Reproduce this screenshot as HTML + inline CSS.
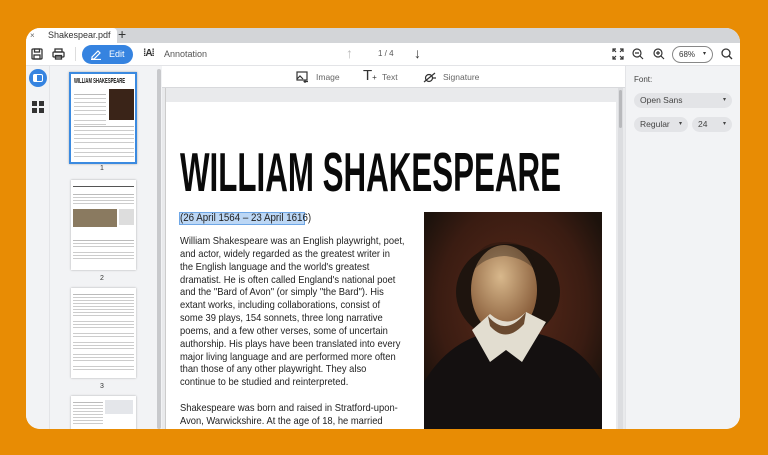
<!DOCTYPE html>
<html><head><meta charset="utf-8"><style>
*{margin:0;padding:0;box-sizing:border-box}
body{width:768px;height:455px;background:#e88c04;position:relative;overflow:hidden;font-family:"Liberation Sans",sans-serif;color:#333}
.win{position:absolute;left:26px;top:28px;width:714px;height:401px;background:#fff;border-radius:14px;overflow:hidden}
.tabbar{position:absolute;left:0;top:0;width:714px;height:15px;background:#d3d5d8}
.tab{position:absolute;left:0;top:0;width:91px;height:15px;background:#fff;border-top-right-radius:4px;font-size:9px;line-height:15px;color:#333}
.tb{position:absolute;left:0;top:15px;width:714px;height:23px;background:#fff;border-bottom:1px solid #e3e4e7}
.ab{position:absolute;font-size:9px;color:#555}
.left{position:absolute;left:0;top:38px;width:24px;height:363px;background:#f2f3f5;border-right:1px solid #e3e4e7}
.thumbs{position:absolute;left:24px;top:38px;width:112px;height:363px;background:#f2f3f5}
.main{position:absolute;left:136px;top:38px;width:463px;height:363px;background:#e9eaec}
.sub{position:absolute;left:0;top:0;width:463px;height:22px;background:#fff;border-bottom:1px solid #d8d9dc}
.right{position:absolute;left:599px;top:38px;width:115px;height:363px;background:#f2f3f5;border-left:1px solid #e3e4e7}
.sel{position:absolute;height:15px;background:#e3e4e7;border-radius:8px;font-size:8.5px;line-height:15px;color:#444;padding-left:6px}
.sel span{position:absolute;right:6px;font-size:6px}
.page{position:absolute;left:4px;top:14px;width:450px;height:340px;background:#fff}
.body{position:absolute;left:14px;font-family:"Liberation Sans",sans-serif;font-size:10.2px;line-height:12.85px;color:#222;white-space:nowrap;transform:scaleX(.92);transform-origin:left top}
.th{position:absolute;background:#fff;box-shadow:0 0 2px rgba(0,0,0,.3)}
.ln{position:absolute;height:1px;background:#bbb}
</style></head><body>
<div class="win">
 <div class="tabbar">
  <div class="tab"><span style="position:absolute;left:4px;font-size:8px;color:#666">×</span><span style="position:absolute;left:22px">Shakespear.pdf</span></div>
  <div style="position:absolute;left:92px;top:-2px;font-size:14px;color:#333">+</div>
 </div>
 <div class="tb">
  <svg style="position:absolute;left:5px;top:5px" width="12" height="12" viewBox="0 0 12 12" fill="none" stroke="#333" stroke-width="1.3"><rect x="1" y="1" width="10" height="10" rx="1"/><rect x="3.5" y="1" width="5" height="3"/><rect x="3" y="7" width="6" height="4"/></svg>
  <svg style="position:absolute;left:26px;top:5px" width="13" height="12" viewBox="0 0 13 12" fill="none" stroke="#333" stroke-width="1.3"><rect x="3" y="1" width="7" height="3"/><rect x="1" y="4" width="11" height="5" rx="1"/><rect x="3.5" y="7.5" width="6" height="3.5"/></svg>
  <div style="position:absolute;left:49px;top:4px;width:1px;height:14px;background:#ddd"></div>
  <div style="position:absolute;left:56px;top:2px;width:51px;height:19px;background:#3583e0;border-radius:10px;color:#fff;font-size:9px;line-height:19px"><svg style="position:absolute;left:8px;top:4px" width="12" height="11" viewBox="0 0 12 11" fill="none" stroke="#fff" stroke-width="1.2"><path d="M2 8 L8 2 L10 4 L4 10 L2 10 Z"/><path d="M1 10.5 H11"/></svg><span style="position:absolute;left:27px">Edit</span></div>
  <div class="ab" style="left:117px;top:5px;font-weight:bold;font-size:10px;color:#333;letter-spacing:-1px">⁞A⁞</div>
  <div class="ab" style="left:138px;top:6px">Annotation</div>
  <div class="ab" style="left:320px;top:2px;font-size:14px;color:#bbb">↑</div>
  <div class="ab" style="left:352px;top:6px;font-size:8px">1 / 4</div>
  <div class="ab" style="left:388px;top:2px;font-size:14px;color:#333">↓</div>
  <svg style="position:absolute;left:586px;top:5px" width="12" height="12" viewBox="0 0 12 12" fill="none" stroke="#333" stroke-width="1.2"><path d="M1 4 V1 H4 M8 1 H11 V4 M11 8 V11 H8 M4 11 H1 V8 M1 1 L4 4 M11 1 L8 4 M11 11 L8 8 M1 11 L4 8"/></svg>
  <svg style="position:absolute;left:606px;top:5px" width="12" height="12" viewBox="0 0 12 12" fill="none" stroke="#333" stroke-width="1.2"><circle cx="5" cy="5" r="4"/><path d="M8 8 L11 11 M3 5 H7"/></svg>
  <svg style="position:absolute;left:627px;top:5px" width="12" height="12" viewBox="0 0 12 12" fill="none" stroke="#333" stroke-width="1.2"><circle cx="5" cy="5" r="4"/><path d="M8 8 L11 11 M3 5 H7 M5 3 V7"/></svg>
  <div style="position:absolute;left:646px;top:3px;width:41px;height:17px;border:1px solid #888;border-radius:9px;font-size:8px;line-height:15px;padding-left:6px;color:#333">68%<span style="position:absolute;right:6px;font-size:6px">▾</span></div>
  <svg style="position:absolute;left:695px;top:5px" width="12" height="12" viewBox="0 0 12 12" fill="none" stroke="#333" stroke-width="1.3"><circle cx="5" cy="5" r="4"/><path d="M8 8 L11 11"/></svg>
 </div>
 <div class="left">
  <div style="position:absolute;left:3px;top:3px;width:18px;height:18px;border-radius:50%;background:#3583e0"><div style="position:absolute;left:4px;top:5px;width:10px;height:8px;border:1.5px solid #fff;border-radius:2px"></div><div style="position:absolute;left:4px;top:5px;width:4px;height:8px;background:#fff;border-radius:2px 0 0 2px"></div></div>
  <div style="position:absolute;left:6px;top:35px;width:12px;height:12px;background:linear-gradient(#333,#333) 0 0/5px 5px no-repeat,linear-gradient(#333,#333) 7px 0/5px 5px no-repeat,linear-gradient(#333,#333) 0 7px/5px 5px no-repeat,linear-gradient(#333,#333) 7px 7px/5px 5px no-repeat"></div>
 </div>
 <div class="thumbs">
  <div class="th" style="left:19px;top:6px;width:68px;height:92px;border:2px solid #3b8ae0">
   <div style="position:absolute;left:3px;top:4px;font-size:7px;font-weight:bold;transform:scaleX(.6);transform-origin:left;white-space:nowrap;color:#111">WILLIAM SHAKESPEARE</div>
   <div style="position:absolute;left:38px;top:15px;width:25px;height:31px;background:#3a2418"></div>
   <div class="ln" style="left:3px;top:20px;width:32px;box-shadow:0 4px #ccc,0 8px #ccc,0 12px #ccc,0 16px #ccc,0 20px #ccc,0 26px #ccc,0 30px #ccc"></div>
   <div class="ln" style="left:3px;top:52px;width:60px;box-shadow:0 4px #ccc,0 8px #ccc,0 12px #ccc,0 16px #ccc,0 22px #ccc,0 26px #ccc,0 30px #ccc"></div>
  </div>
  <div style="position:absolute;left:50px;top:99px;font-size:7px">1</div>
  <div class="th" style="left:21px;top:114px;width:65px;height:90px">
   <div style="position:absolute;left:2px;top:6px;width:61px;height:1px;background:#555"></div>
   <div class="ln" style="left:2px;top:14px;width:61px;box-shadow:0 3px #ccc,0 6px #ccc,0 9px #ccc"></div>
   <div style="position:absolute;left:2px;top:29px;width:44px;height:18px;background:#8a7a60"></div>
   <div style="position:absolute;left:48px;top:29px;width:15px;height:16px;background:#ddd"></div>
   <div class="ln" style="left:2px;top:60px;width:61px;box-shadow:0 3px #ccc,0 6px #ccc,0 12px #ccc,0 15px #ccc,0 18px #ccc"></div>
  </div>
  <div style="position:absolute;left:50px;top:209px;font-size:7px">2</div>
  <div class="th" style="left:21px;top:222px;width:65px;height:90px">
   <div class="ln" style="left:2px;top:6px;width:61px;box-shadow:0 3px #ccc,0 6px #ccc,0 9px #ccc,0 12px #ccc,0 15px #ccc,0 18px #ccc,0 21px #ccc,0 27px #ccc,0 30px #ccc,0 33px #ccc,0 39px #ccc,0 42px #ccc,0 48px #ccc,0 51px #ccc,0 54px #ccc,0 60px #ccc,0 63px #ccc,0 66px #ccc,0 72px #ccc,0 75px #ccc"></div>
  </div>
  <div style="position:absolute;left:50px;top:317px;font-size:7px">3</div>
  <div class="th" style="left:21px;top:330px;width:65px;height:40px">
   <div style="position:absolute;left:34px;top:4px;width:28px;height:14px;background:#e4e6ea"></div>
   <div class="ln" style="left:2px;top:6px;width:30px;box-shadow:0 3px #ccc,0 6px #ccc,0 9px #ccc,0 12px #ccc,0 15px #ccc,0 18px #ccc,0 21px #ccc"></div>
  </div>
  <div style="position:absolute;left:107px;top:3px;width:4px;height:360px;background:#c8c9cc;border-radius:2px"></div>
 </div>
 <div class="main">
  <div class="sub">
   <svg style="position:absolute;left:134px;top:5px" width="13" height="12" viewBox="0 0 13 12" fill="none" stroke="#333" stroke-width="1.2"><rect x="1" y="1" width="10" height="8"/><path d="M1 8 L4 5 L7 8 M9 9 V12 M7.5 10.5 H12"/></svg>
   <div class="ab" style="left:154px;top:6px;font-size:8.5px;color:#666">Image</div>
   <div class="ab" style="left:201px;top:1px;font-size:15px;color:#333">T<span style="font-size:8px">+</span></div>
   <div class="ab" style="left:220px;top:6px;font-size:8.5px;color:#666">Text</div>
   <svg style="position:absolute;left:261px;top:4px" width="14" height="13" viewBox="0 0 14 13" fill="none" stroke="#333" stroke-width="1.2"><circle cx="6" cy="8" r="3.5"/><path d="M1 12 L12 3 M9 8 H13"/></svg>
   <div class="ab" style="left:281px;top:6px;font-size:8.5px;color:#666">Signature</div>
  </div>
  <div style="position:absolute;left:0;top:22px;width:463px;height:341px;background:#e9eaec">
   <div style="position:absolute;left:3px;top:0;width:1px;height:341px;background:#ccc"></div>
   <div class="page">
    <svg style="position:absolute;left:14px;top:44px" width="385" height="50"><text x="0" y="45" textLength="381" lengthAdjust="spacingAndGlyphs" font-family="Liberation Sans Narrow, Liberation Sans, sans-serif" font-weight="bold" font-size="55" fill="#0a0a0a">WILLIAM SHAKESPEARE</text></svg>
    <div style="position:absolute;left:13px;top:110px;width:126px;height:13px;background:#bcd7f5;border:1px solid #6fa7e6"></div>
    <div class="body" style="top:110px;font-size:10.6px">(26 April 1564 – 23 April 1616)</div>
    <div class="body" style="top:134px">William Shakespeare was an English playwright, poet,<br>and actor, widely regarded as the greatest writer in<br>the English language and the world's greatest<br>dramatist. He is often called England's national poet<br>and the "Bard of Avon" (or simply "the Bard"). His<br>extant works, including collaborations, consist of<br>some 39 plays, 154 sonnets, three long narrative<br>poems, and a few other verses, some of uncertain<br>authorship. His plays have been translated into every<br>major living language and are performed more often<br>than those of any other playwright. They also<br>continue to be studied and reinterpreted.</div>
    <div class="body" style="top:301px">Shakespeare was born and raised in Stratford-upon-<br>Avon, Warwickshire. At the age of 18, he married<br>Anne Hathaway, with whom he had three children:</div>
    <svg style="position:absolute;left:258px;top:110px" width="178" height="230" viewBox="0 0 178 230">
     <defs><radialGradient id="bg" cx="50%" cy="40%" r="60%"><stop offset="0" stop-color="#5a2a1a"/><stop offset=".7" stop-color="#3a1c12"/><stop offset="1" stop-color="#1c120c"/></radialGradient>
     <radialGradient id="fc" cx="45%" cy="35%" r="60%"><stop offset="0" stop-color="#d8b88c"/><stop offset="1" stop-color="#8a5f3c"/></radialGradient></defs>
     <rect width="178" height="230" fill="url(#bg)"/>
     <ellipse cx="84" cy="80" rx="52" ry="48" fill="#1e140e"/>
     <ellipse cx="80" cy="78" rx="33" ry="45" fill="url(#fc)"/>
     <path d="M48 60 Q50 30 80 30 Q110 30 113 60 Q100 45 80 44 Q60 45 48 60 Z" fill="#1e140e" opacity=".35"/>
     <path d="M0 230 L0 170 Q30 120 85 118 Q150 120 178 170 L178 230 Z" fill="#141010"/>
     <path d="M48 118 L66 150 L82 138 L98 150 L122 110 L102 100 Q84 118 66 102 Z" fill="#e2ddd0"/>
     <path d="M64 104 Q82 126 102 100 L100 112 Q82 132 66 114 Z" fill="#6a4a30"/>
    </svg>
   </div>
   <div style="position:absolute;left:456px;top:0;width:5px;height:341px;background:#dcdde0"></div>
   <div style="position:absolute;left:457px;top:2px;width:3px;height:38px;background:#b8b9bc;border-radius:2px"></div>
  </div>
 </div>
 <div class="right">
  <div style="position:absolute;left:8px;top:9px;font-size:8px;color:#444">Font:</div>
  <div class="sel" style="left:8px;top:27px;width:98px">Open Sans<span>▾</span></div>
  <div class="sel" style="left:8px;top:51px;width:54px">Regular<span>▾</span></div>
  <div class="sel" style="left:66px;top:51px;width:40px">24<span>▾</span></div>
 </div>
</div>
</body></html>
